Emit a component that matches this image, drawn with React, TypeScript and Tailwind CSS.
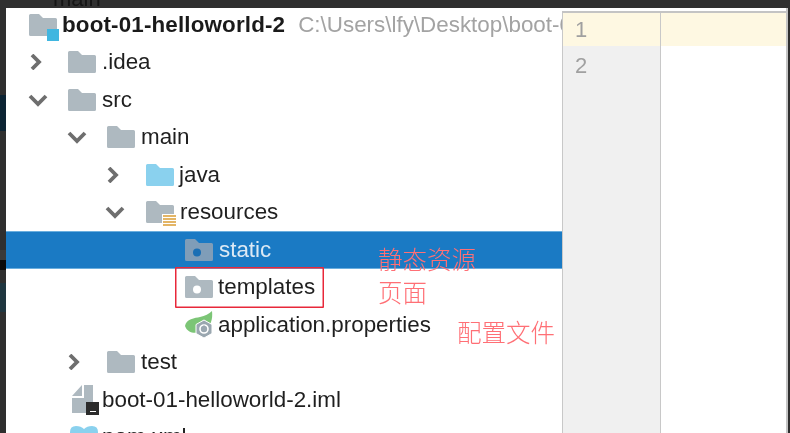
const FONT = { fontFamily: '"Liberation Sans", Arial, sans-serif' };

function Folder({ color = "#aeb9c0", dot }: { color?: string; dot?: string }) {
  return (
    <svg width="28" height="22" viewBox="0 0 28 22" className="shrink-0">
      <path d="M0 1.5 Q0 0 1.5 0 H10 L14 4 H26.5 Q28 4 28 5.5 V20.5 Q28 22 26.5 22 H1.5 Q0 22 0 20.5 Z" fill={color} />
      {dot && <circle cx="12" cy="13.5" r="4" fill={dot} />}
    </svg>
  );
}

function Chevron({ open }: { open?: boolean }) {
  return (
    <svg width="20" height="16" viewBox="0 0 20 16" className="shrink-0">
      {open ? (
        <path d="M2 4 L10 12 L18 4" fill="none" stroke="#6e6e6e" strokeWidth="3.8" />
      ) : (
        <path d="M2 1 L9 8 L2 15" fill="none" stroke="#6e6e6e" strokeWidth="3.8" />
      )}
    </svg>
  );
}

function RootIcon() {
  return (
    <span className="relative block w-[28px] h-[22px] shrink-0">
      <Folder />
      <span className="absolute left-[18px] top-[15px] w-[12px] h-[12px] bg-[#40b6e0]" />
    </span>
  );
}

function ResourcesIcon() {
  return (
    <span className="relative block w-[28px] h-[22px] shrink-0">
      <Folder />
      <span className="absolute left-[16px] top-[13px] w-[14px] h-[16px] bg-white pl-[1px]">
        <span className="block mt-[1px] h-[2px] bg-[#e3b566]" />
        <span className="block mt-[1px] h-[2px] bg-[#e3b566]" />
        <span className="block mt-[1px] h-[2px] bg-[#e3b566]" />
        <span className="block mt-[1px] h-[2px] bg-[#e3b566]" />
      </span>
    </span>
  );
}

function SpringIcon() {
  return (
    <svg width="30" height="28" viewBox="0 0 30 28" className="shrink-0">
      <path d="M0 15 C1 8 10 7 15 6 C20 5 24 3 27 0 C28 8 26 16 18 20 C11 23 3 23 0 15 Z" fill="#7cc576" />
      <path d="M19 9 L27 13.5 V22.5 L19 27 L11 22.5 V13.5 Z" fill="#9aa7b0" stroke="#fff" strokeWidth="1" />
      <circle cx="19" cy="18" r="4" fill="none" stroke="#fff" strokeWidth="1.6" />
      <path d="M19 14.5 V18" stroke="#9aa7b0" strokeWidth="1.5" />
    </svg>
  );
}

function ImlIcon() {
  return (
    <span className="relative block w-[26px] h-[29px] shrink-0">
      <svg width="22" height="29" viewBox="0 0 22 29">
        <path d="M0 11 L10 0 V11 Z M0 13 H12 V0 H21 V28 H0 Z" fill="#aeb9c0" />
      </svg>
      <span className="absolute left-[14px] top-[17px] w-[13px] h-[13px] bg-[#2b2b2b] flex items-end justify-center pb-[3px]">
        <span className="block w-[6px] h-[1px] bg-white" />
      </span>
    </span>
  );
}

function PomIcon() {
  return (
    <svg width="28" height="22" viewBox="0 0 28 22" className="shrink-0">
      <path d="M0 6 Q0 0 6 0 Q11 0 14 3 Q17 0 22 0 Q28 0 28 6 V22 H0 Z" fill="#8ad1ee" />
    </svg>
  );
}

type Row = {
  pad: string;
  icon: React.ReactNode;
  label: string;
  arrow?: "open" | "closed";
  gap: string;
  arrowGap?: string;
  selected?: boolean;
};

const rows: Row[] = [
  { pad: "pl-[24px]", arrow: "closed", arrowGap: "mr-[18px]", icon: <Folder />, label: ".idea", gap: "ml-[6px]" },
  { pad: "pl-[22px]", arrow: "open", arrowGap: "mr-[20px]", icon: <Folder />, label: "src", gap: "ml-[6px]" },
  { pad: "pl-[61px]", arrow: "open", arrowGap: "mr-[20px]", icon: <Folder />, label: "main", gap: "ml-[6px]" },
  { pad: "pl-[101px]", arrow: "closed", arrowGap: "mr-[19px]", icon: <Folder color="#8ad1ee" />, label: "java", gap: "ml-[5px]" },
  { pad: "pl-[99px]", arrow: "open", arrowGap: "mr-[21px]", icon: <ResourcesIcon />, label: "resources", gap: "ml-[6px]" },
  { pad: "pl-[179px]", icon: <Folder color="#7f9db8" dot="#1a6fb4" />, label: "static", gap: "ml-[6px]", selected: true },
  { pad: "pl-[179px]", icon: <Folder dot="#ffffff" />, label: "templates", gap: "ml-[5px]" },
  { pad: "pl-[179px]", icon: <SpringIcon />, label: "application.properties", gap: "ml-[3px]" },
  { pad: "pl-[62px]", arrow: "closed", arrowGap: "mr-[19px]", icon: <Folder />, label: "test", gap: "ml-[6px]" },
  { pad: "pl-[66px]", icon: <ImlIcon />, label: "boot-01-helloworld-2.iml", gap: "ml-[4px]" },
  { pad: "pl-[64px]", icon: <PomIcon />, label: "pom.xml", gap: "ml-[4px]" },
];

export default function App() {
  return (
    <div className="w-[790px] h-[433px] overflow-hidden bg-[#2f2f2f] flex flex-col blur-[0.5px]" style={FONT}>
      {/* dark window behind, only the bottom of the tab shows */}
      <div className="h-[8px] shrink-0 overflow-hidden pl-[53px] flex">
        <span className="block -mt-[12px] text-[22px] leading-[22px] text-[#141414]">main</span>
      </div>

      <div className="flex-1 min-h-0 flex relative">
        {/* left strip */}
        <div className="w-[6px] shrink-0 flex flex-col">
          <div className="h-[87px]" />
          <div className="h-[36px] bg-[#0c2433]" />
          <div className="h-[119px]" />
          <div className="h-[10px] bg-[#3a3a3a]" />
          <div className="h-[10px] bg-[#0b0b0b]" />
          <div className="h-[13px]" />
          <div className="h-[29px] bg-[#1f3640]" />
        </div>

        {/* project tree */}
        <div className="w-[556px] shrink-0 bg-white overflow-hidden">
          <div className="h-[35.5px] flex items-center pl-[23px] pb-[1px] whitespace-nowrap">
            <RootIcon />
            <span className="ml-[5px] text-[22.4px] font-bold text-[#1a1a1a] tracking-[0.15px]">boot-01-helloworld-2</span>
            <span className="ml-[13px] text-[22.4px] text-[#a3a3a3]">C:\Users\lfy\Desktop\boot-01-helloworld-2</span>
          </div>
          {rows.map((r) => (
            <div
              key={r.label}
              className={
                r.selected
                  ? "h-[37.5px] flex items-center whitespace-nowrap bg-[#1a7ac4] shadow-[inset_0_1px_0_#6aaede,inset_0_-1px_0_#6aaede] " + r.pad
                  : "h-[37.5px] flex items-center whitespace-nowrap " + r.pad
              }
            >
              {r.arrow && (
                <span className={"block " + r.arrowGap}>
                  <Chevron open={r.arrow === "open"} />
                </span>
              )}
              {r.icon}
              <span className={(r.selected ? "text-[#dce9f4] " : "text-[#1f1f1f] ") + "text-[22.4px] " + r.gap}>{r.label}</span>
            </div>
          ))}
        </div>

        {/* line numbers and editor */}
        <div className="flex-1 flex flex-col bg-white">
          <div className="h-[3px] shrink-0" />
          <div className="h-[2px] shrink-0 bg-[#c4c4c4]" />
          <div className="flex-1 flex">
            <div className="w-[99px] shrink-0 bg-[#f0f0f0] border-x border-[#c8c8c8] text-[22px] text-[#a0a0a0]">
              <div className="h-[33px] bg-[#fef8e2] pl-[12px] flex items-center">1</div>
              <div className="h-[38px] pl-[12px] flex items-center">2</div>
            </div>
            <div className="flex-1">
              <div className="h-[33px] bg-[#fef8e2]" />
            </div>
          </div>
        </div>
        <div className="w-[4px] shrink-0 border-l-2 border-[#c4c4c4] bg-[#2f2f2f]" />

        {/* annotations */}
        <div className="absolute left-[175px] top-[259px] w-[149px] h-[41px] rounded-[1px] shadow-[inset_0_0_0_1.5px_#e8283a]" />
        <div
          className="absolute left-[378px] top-[235px] text-[24.5px] leading-[32px] text-[#ff6f75] whitespace-nowrap"
          style={{ fontFamily: '"Noto Sans CJK SC", sans-serif', fontWeight: 300 }}
        >
          静态资源
        </div>
        <div
          className="absolute left-[378px] top-[268px] text-[24.5px] leading-[32px] text-[#ff6f75] whitespace-nowrap"
          style={{ fontFamily: '"Noto Sans CJK SC", sans-serif', fontWeight: 300 }}
        >
          页面
        </div>
        <div
          className="absolute left-[457px] top-[308px] text-[24.5px] leading-[32px] text-[#ff6f75] whitespace-nowrap"
          style={{ fontFamily: '"Noto Sans CJK SC", sans-serif', fontWeight: 300 }}
        >
          配置文件
        </div>
      </div>
    </div>
  );
}
